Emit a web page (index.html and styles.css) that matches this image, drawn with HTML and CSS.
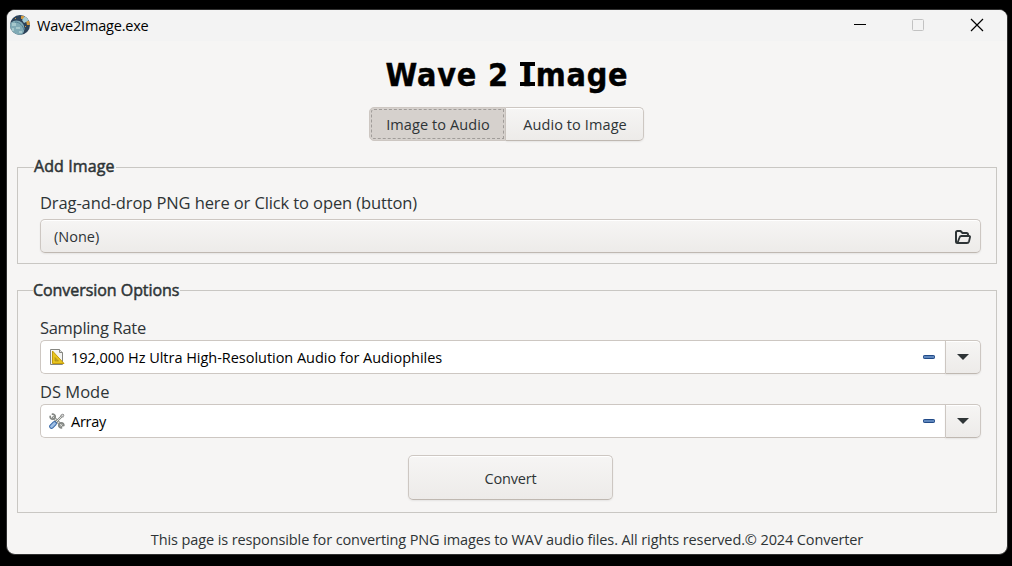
FILE: index.html
```html
<!DOCTYPE html>
<html lang="en">
<head>
<meta charset="utf-8">
<title>Wave2Image.exe</title>
<link rel="stylesheet" href="styles.css">
</head>
<body>
<div class="window">
  <header class="titlebar">
    <svg class="app-icon" width="20" height="20" viewBox="0 0 20 20">
      <defs><clipPath id="disc"><circle cx="10" cy="10" r="10"/></clipPath></defs>
      <g clip-path="url(#disc)">
        <path fill="#2c4258" d="M0 0h20v20H0z"/>
        <path fill="#d29a3f" d="M11 1h3v3h-3zM16 6h4v4h-3zM5 3h1v1H5zM15 11h1v1h-1z"/>
        <path fill="#a5cbd3" d="M12 5l3-4 4 4-3 2-2 1z"/>
        <circle cx="6.500" cy="13.500" r="8" fill="#80aab5"/>
        <path fill="#a6c8cc" d="M2 8h4v3H2zM6 12h4v2H6zM2 13h2v3H2zM9 16h3v2H9z"/>
        <path fill="none" stroke="#537e91" d="M5 7c5 0 8 4 9 8"/>
      </g>
    </svg>
    <span class="app-name">Wave2Image.exe</span>
    <svg class="controls" width="132" height="14" viewBox="0 0 132 14">
      <path d="M1 6.500h12" stroke="#000"/>
      <rect x="59.500" y="1.500" width="11" height="11" rx="1" fill="none" stroke="#c2c2c2"/>
      <path d="M118 1l12 12M130 1l-12 12" stroke="#000" stroke-width="1.200"/>
    </svg>
  </header>
  <main class="content">
    <h1 class="heading">Wave 2 <span class="slab">I</span>mage</h1>
    <nav class="tabs">
      <button class="tab active"><span>Image to Audio</span></button>
      <button class="tab"><span>Audio to Image</span></button>
    </nav>
    <section class="group add">
      <h2 class="legend legend-add">Add Image</h2>
      <p class="label drag">Drag-and-drop PNG here or Click to open (button)</p>
      <button class="file">
        <span>(None)</span>
        <svg width="16" height="14" viewBox="0 0 16 14" fill="none" stroke="#2e3436" stroke-width="2" stroke-linejoin="round" stroke-linecap="round">
          <path d="M2.500 13Q1 13 1 11.500V2.500Q1 1 2.500 1H5.500L7.500 3H11.500Q13 3 13 4.500"/>
          <path d="M2.500 13L4.600 7.300Q5 6 6.500 6H14Q15.300 6 15 7.300L14 11.500Q13.600 13 12 13Z" stroke-width="1.800"/>
        </svg>
      </button>
    </section>
    <section class="group options">
      <h2 class="legend legend-options">Conversion Options</h2>
      <p class="label sampling">Sampling Rate</p>
      <div class="combo">
        <div class="entry">
          <svg width="16" height="16" viewBox="0 0 16 16">
            <path d="M1.500.5h9l3 3v12h-12z" fill="#f4f4f2" stroke="#858681"/>
            <path d="M10.500.5v3h3" fill="#ddd" stroke="#858681"/>
            <path d="M3.500 2v12.500H15z" fill="#e8c51f" stroke="#c39a0b"/>
            <path d="M6 8.500V12h3.500z" fill="#c5a520" stroke="#a98a12" stroke-width=".6"/>
          </svg>
          <span class="value rate">192,000 Hz Ultra High-Resolution Audio for Audiophiles</span>
          <svg class="minus" width="12" height="4" viewBox="0 0 12 4"><rect x=".5" y=".5" width="11" height="3" rx=".7" fill="#5f87bd" stroke="#214a87"/></svg>
        </div>
        <button class="drop"><svg width="12" height="6" viewBox="0 0 12 6"><path d="M0 0h12L6 6z" fill="#2e3436"/></svg></button>
      </div>
      <p class="label mode">DS Mode</p>
      <div class="combo">
        <div class="entry">
          <svg width="16" height="16" viewBox="0 0 16 16" fill="none" stroke-linecap="round">
            <path d="M4.500 4.500l8 8" stroke="#7f827e" stroke-width="3"/>
            <path d="M4.500 4.500l8 8" stroke="#dfe0de" stroke-width="1.200"/>
            <path d="M1.200 3.500A2.500 2.500 0 1 0 3.500 1.200M14.800 12.500A2.500 2.500 0 1 0 12.500 14.800" stroke="#858885" stroke-width="1.800"/>
            <path d="M7 9L13 3" stroke="#7f827e" stroke-width="2.200"/>
            <path d="M7 9L13 3" stroke="#e4e5e3"/>
            <path d="M12 2l2-1 1 1-1 2z" fill="#ddd" stroke="#999"/>
            <path d="M5.500 10.500l-3 3" stroke="#3465a4" stroke-width="4.600"/>
            <path d="M5.500 10.500l-3 3" stroke="#9fbfe5" stroke-width="2.800"/>
          </svg>
          <span class="value array">Array</span>
          <svg class="minus" width="12" height="4" viewBox="0 0 12 4"><rect x=".5" y=".5" width="11" height="3" rx=".7" fill="#5f87bd" stroke="#214a87"/></svg>
        </div>
        <button class="drop"><svg width="12" height="6" viewBox="0 0 12 6"><path d="M0 0h12L6 6z" fill="#2e3436"/></svg></button>
      </div>
      <button class="convert"><span>Convert</span></button>
    </section>
    <footer class="footer"><span>This page is responsible for converting PNG images to WAV audio files. All rights reserved.© 2024 Converter</span></footer>
  </main>
</div>
</body>
</html>
```

FILE: styles.css
```css
* { box-sizing: border-box; }
body { margin: 0; width: 1012px; height: 566px; padding: 9px 4px 11px 6px; background: #000; font: 14.500px/20px "Open Sans", sans-serif; color: #2e3436; overflow: hidden; }
button { font: inherit; color: inherit; padding: 0; border: 1px solid #cdc7c2; border-bottom-color: #bfb8b1; border-radius: 5px; background: linear-gradient(#f6f5f4, #edebe9); box-shadow: inset 0 1px #fff, 0 1px 2px rgba(0,0,0,.07); }
.window { width: 1002px; height: 546px; border: 1px solid #303030; border-radius: 9px; background: #f6f5f4; overflow: hidden; }
.titlebar { height: 31px; background: #f3f3f3; display: flex; align-items: center; padding: 0 22px 2px 3px; color: #000; }
.app-icon { margin-right: 7px; }
.app-name { letter-spacing: -.2px; padding-top: 2px; }
.controls { margin-left: auto; }
.content { padding: 0 10px; display: flex; flex-direction: column; }
.heading { margin: 13px 0 0; height: 42px; text-align: center; font: 700 32px/42px "DejaVu Sans Condensed", "DejaVu Sans", sans-serif; font-stretch: condensed; letter-spacing: .8px; -webkit-text-stroke: .4px #000; color: #000; }
.slab { display: inline-block; width: 15px; height: 42px; text-align: center; letter-spacing: 0; margin-right: 1px; background: linear-gradient(#000, #000) 0 8px / 15px 4px no-repeat, linear-gradient(#000, #000) 0 28px / 15px 4px no-repeat; }
.tabs { display: flex; align-self: center; margin: 11px 2px 0 0; }
.tab { width: 138px; height: 34px; padding: 2px 0 0 2px; border-radius: 0 5px 5px 0; border-left: 0; letter-spacing: .1px; }
.tab.active { width: 137px; border: 1px solid #cdc7c2; border-radius: 5px 0 0 5px; background: #d6d1cd; box-shadow: none; outline: 1px dashed #a09c99; outline-offset: -3px; }
.group { border: 1px solid #c9c7c3; padding: 0 15px 0 22px; display: flex; flex-direction: column; align-items: stretch; }
.add { height: 97px; margin-top: 26px; }
.options { height: 223px; margin-top: 26px; }
.legend { align-self: flex-start; margin: -13px 0 0 -6px; height: 22px; padding-right: 1px; background: #f6f5f4; font: 400 16px/22px "Open Sans", sans-serif; -webkit-text-stroke: .5px #2e3436; }
.legend-add { letter-spacing: .1px; }
.legend-options { margin: -12px 0 -1px -7px; letter-spacing: -.05px; }
.label { margin: 0; font-size: 16.500px; line-height: 22px; }
.drag { margin-top: 15px; letter-spacing: -.11px; }
.file { height: 34px; margin-top: 5px; padding: 0 9px 0 13px; display: flex; justify-content: space-between; align-items: center; }
.file span { padding-top: 2px; }
.file svg { margin-top: 2px; }
.sampling { margin-top: 17px; letter-spacing: -.3px; }
.mode { margin-top: 7px; }
.combo { display: flex; height: 34px; margin-top: 1px; }
.entry { flex: 1; display: flex; align-items: center; padding: 0 10px 0 8px; border: 1px solid #cdc7c2; border-right: 0; border-radius: 5px 0 0 5px; background: #fff; color: #000; }
.value { margin-left: 6px; padding-top: 2px; }
.rate { letter-spacing: -.03px; }
.array { letter-spacing: -.25px; }
.minus { margin-left: auto; }
.drop { width: 36px; border-radius: 0 5px 5px 0; display: flex; align-items: center; justify-content: center; }
.convert { width: 205px; height: 45px; padding-top: 2px; margin: 17px 0 0 368px; letter-spacing: -.2px; }
.footer { margin-top: 17px; text-align: center; white-space: nowrap; letter-spacing: -.11px; }
```
